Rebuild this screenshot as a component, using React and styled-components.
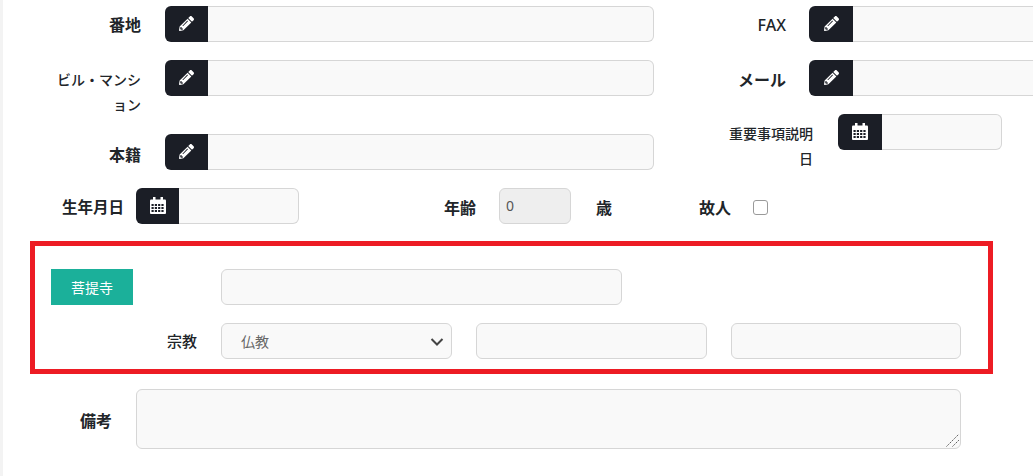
import React from "react";
import styled, { createGlobalStyle } from "styled-components";
import { FaPencilAlt } from "react-icons/fa";

const Global = createGlobalStyle`
  html, body { margin: 0; padding: 0; background: #fff; }
  body { font-family: "Noto Sans", "Noto Sans CJK JP", sans-serif; color: #212529; }
`;

const Page = styled.div`
  width: 1033px;
  height: 476px;
  box-sizing: border-box;
  overflow: hidden;
  border-left: 3px solid #f3f3f3;
  padding-top: 6px;
`;

const Columns = styled.div`
  display: grid;
  grid-template-columns: 651px 1fr;
`;

const Column = styled.div`
  display: flex;
  flex-direction: column;
  min-width: 0;
`;

const Field = styled.div`
  display: flex;
  align-items: flex-start;
  margin-bottom: ${(p) => p.$after ?? 18}px;
`;

const Label = styled.label`
  flex: none;
  box-sizing: border-box;
  width: ${(p) => p.$width}px;
  margin-left: ${(p) => p.$offset ?? 0}px;
  margin-right: ${(p) => p.$gap}px;
  padding-top: ${(p) => p.$top ?? 7}px;
  text-align: right;
  font-size: ${(p) => p.$size ?? 16}px;
  font-weight: ${(p) => p.$weight ?? 700};
  line-height: 25px;
  line-break: anywhere;
  color: #212529;
`;

const Group = styled.div`
  display: flex;
  height: 36px;
  flex: none;
  width: ${(p) => p.$width}px;
`;

const Addon = styled.span`
  flex: none;
  width: ${(p) => (p.$wide ? 44 : 43)}px;
  height: 36px;
  display: flex;
  align-items: center;
  justify-content: center;
  padding-bottom: 2px;
  box-sizing: border-box;
  background: #1b1e26;
  color: #fff;
  border-radius: 6px 0 0 6px;
`;

const Input = styled.input`
  box-sizing: border-box;
  height: 36px;
  min-width: 0;
  width: ${(p) => (p.$width ? `${p.$width}px` : "100%")};
  flex: ${(p) => (p.$width ? "none" : "1")};
  margin-left: ${(p) => p.$left ?? 0}px;
  margin-right: ${(p) => p.$right ?? 0}px;
  padding: 0 6px 2px;
  background: ${(p) => (p.disabled ? "#eeeeee" : "#f9f9f9")};
  border: 1px solid #d6d6d6;
  border-radius: ${(p) => (p.$joined ? "0 6px 6px 0" : "6px")};
  border-left-width: ${(p) => (p.$joined ? 0 : 1)}px;
  font: 14px "Noto Sans", sans-serif;
  color: #555;
  outline: none;
  opacity: 1;
`;

const BottomRow = styled.div`
  display: flex;
  align-items: flex-start;
`;

const Unit = styled.span`
  flex: none;
  margin-left: ${(p) => p.$left}px;
  padding-top: 8px;
  font-size: 16px;
  font-weight: 700;
  line-height: 25px;
`;

const Check = styled.span`
  flex: none;
  box-sizing: border-box;
  width: 15px;
  height: 15px;
  margin: 12px 0 0 22px;
  background: #fff;
  border: 1.5px solid #9a9a9a;
  border-radius: 3px;
`;

const Panel = styled.section`
  box-sizing: border-box;
  width: 963px;
  height: 133px;
  margin: 17px 0 15px 27px;
  padding: 23px 27px 0 16px;
  border: 5px solid #ed1c24;
  display: flex;
  flex-direction: column;
  gap: 18px;
`;

const PanelRow = styled.div`
  display: flex;
  align-items: flex-start;
`;

const TealButton = styled.button`
  flex: none;
  width: 82px;
  height: 36px;
  margin-right: 88px;
  padding: 0;
  border: none;
  background: #1bb09a;
  color: #fff;
  font: 14px "Noto Sans CJK JP", sans-serif;
`;

const PanelLabel = styled.span`
  flex: none;
  width: 146px;
  margin-right: 24px;
  padding-top: 6px;
  text-align: right;
  font-size: 15px;
  line-height: 25px;
  font-weight: 500;
`;

const SelectBox = styled.div`
  position: relative;
  flex: none;
  width: 231px;
  height: 36px;
  margin-right: 24px;
  box-sizing: border-box;
  padding: 0 19px;
  display: flex;
  align-items: center;
  background: #f9f9f9;
  border: 1px solid #d6d6d6;
  border-radius: 6px;
  font-size: 14px;
  color: #666;
`;

const Chevron = styled.svg`
  position: absolute;
  right: 7px;
  top: 13px;
`;

const NotesRow = styled.div`
  display: flex;
  align-items: flex-start;
`;

const NotesBox = styled.div`
  position: relative;
  flex: none;
  width: 825px;
  height: 60px;
`;

const Notes = styled.textarea`
  display: block;
  box-sizing: border-box;
  width: 100%;
  height: 100%;
  resize: none;
  background: #f9f9f9;
  border: 1px solid #d6d6d6;
  border-radius: 6px;
  outline: none;
`;

const Grip = styled.svg`
  position: absolute;
  right: 1px;
  bottom: 2px;
`;

const Pencil = ({ wide }) => (
  <Addon $wide={wide}>
    <FaPencilAlt size={15} />
  </Addon>
);

const cells = [];
for (let r = 0; r < 3; r++) {
  for (let c = 0; c < 4; c++) {
    cells.push([1.5 + c * 3.3, 7 + r * 3]);
  }
}

const Calendar = ({ wide }) => (
  <Addon $wide={wide}>
    <svg width="16" height="17" viewBox="0 0 16 17">
      <rect x="3" y="0" width="2.5" height="3" fill="currentColor" />
      <rect x="10.5" y="0" width="2.5" height="3" fill="currentColor" />
      <rect x="0" y="2.5" width="16" height="14.5" rx="1" fill="currentColor" />
      {cells.map(([x, y]) => (
        <rect key={`${x}-${y}`} x={x} y={y} width="2.2" height="2" fill="#1b1e26" />
      ))}
    </svg>
  </Addon>
);

export default function App() {
  return (
    <Page>
      <Global />
      <Columns>
        <Column>
          <Field>
            <Label $width={88} $offset={50} $gap={24}>番地</Label>
            <Group $width={489}><Pencil /><Input $joined /></Group>
          </Field>
          <Field $after={17}>
            <Label $width={88} $offset={50} $gap={24} $size={14} $weight={500}>ビル・マンション</Label>
            <Group $width={489}><Pencil /><Input $joined /></Group>
          </Field>
          <Field>
            <Label $width={88} $offset={50} $gap={24} $top={9}>本籍</Label>
            <Group $width={489}><Pencil /><Input $joined /></Group>
          </Field>
        </Column>
        <Column>
          <Field>
            <Label $width={88} $offset={44} $gap={23} $weight={500}>FAX</Label>
            <Group $width={300}><Pencil wide /><Input $joined /></Group>
          </Field>
          <Field>
            <Label $width={88} $offset={44} $gap={23} $top={8}>メール</Label>
            <Group $width={300}><Pencil wide /><Input $joined /></Group>
          </Field>
          <Field $after={0}>
            <Label $width={88} $offset={71} $gap={25} $size={14} $weight={500}>重要事項説明日</Label>
            <Group $width={164}><Calendar wide /><Input $joined /></Group>
          </Field>
        </Column>
      </Columns>
      <BottomRow>
        <Label $width={121} $gap={12} $size={15.5}>生年月日</Label>
        <Group $width={163}><Calendar /><Input $joined /></Group>
        <Unit $left={145}>年齢</Unit>
        <Input $width={72} $left={23} disabled value="0" readOnly />
        <Unit $left={25}>歳</Unit>
        <Unit $left={87}>故人</Unit>
        <Check />
      </BottomRow>
      <Panel>
        <PanelRow>
          <TealButton>菩提寺</TealButton>
          <Input $width={401} />
        </PanelRow>
        <PanelRow>
          <PanelLabel>宗教</PanelLabel>
          <SelectBox>
            仏教
            <Chevron width="14" height="10" viewBox="0 0 14 10">
              <path d="M1.5 2 L7 7.5 L12.5 2" fill="none" stroke="#444" strokeWidth="2" />
            </Chevron>
          </SelectBox>
          <Input $width={231} $right={24} />
          <Input $width={230} />
        </PanelRow>
      </Panel>
      <NotesRow>
        <Label $width={109} $gap={24} $top={20}>備考</Label>
        <NotesBox>
          <Notes />
          <Grip width="14" height="13" viewBox="0 0 14 13">
            <path d="M0.5 12.5 L12.5 0.5 M6.5 12.5 L13.5 5.5" fill="none" stroke="#555" strokeWidth="1" strokeDasharray="1.5 1" />
          </Grip>
        </NotesBox>
      </NotesRow>
    </Page>
  );
}
